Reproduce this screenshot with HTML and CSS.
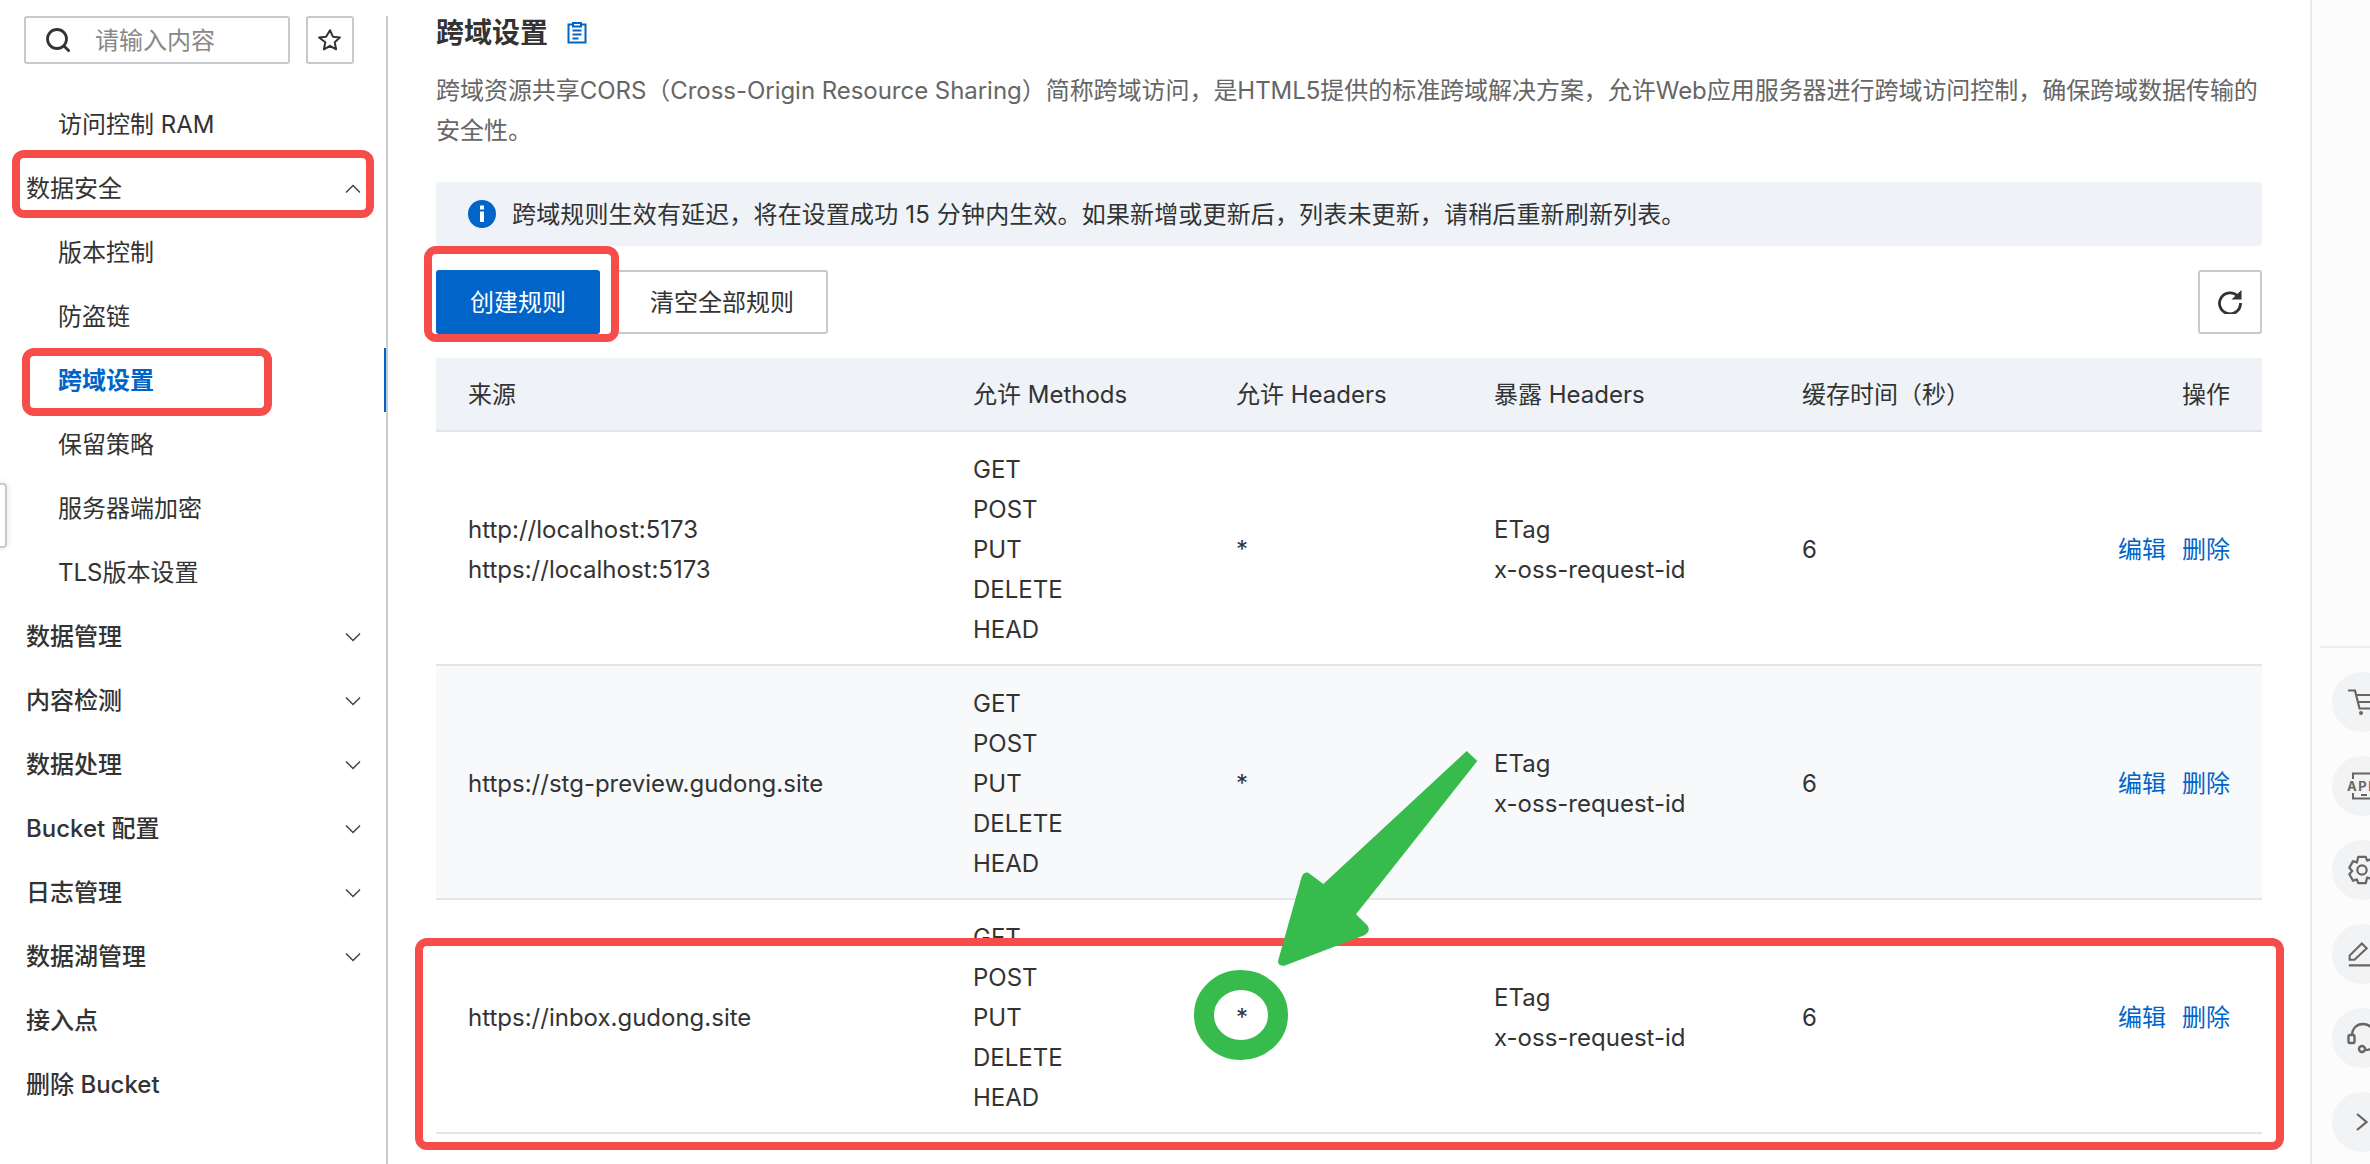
FILE: index.html
```html
<!DOCTYPE html>
<html lang="zh-CN">
<head>
<meta charset="utf-8">
<title>跨域设置</title>
<link rel="stylesheet" href="styles.css">
</head>
<body>
<div class="page">
  <aside class="sidebar">
    <div class="search-row">
      <div class="search">
        <svg class="search-icon" viewBox="0 0 24 24" width="24" height="24"><circle cx="11" cy="11" r="9.500" fill="none" stroke="#333" stroke-width="2.800"/><path d="M17.500 17.500 23.500 23.500" stroke="#333" stroke-width="2.800" fill="none"/></svg>
        <span class="placeholder">请输入内容</span>
      </div>
      <button class="star-btn"><svg viewBox="0 0 24 24" width="24" height="24"><path d="M12 2.200l2.900 6.500 7 .8-5.200 4.800 1.400 7-6.100-3.500-6.100 3.500 1.400-7L1.100 9.500l7-.8z" fill="none" stroke="#333" stroke-width="2" stroke-linejoin="round"/></svg></button>
    </div>
    <nav class="nav">
      <div class="nav-item sub">访问控制 RAM</div>
      <div class="nav-item open">数据安全<svg class="chev" viewBox="0 0 16 10" width="16" height="10"><path d="M1 8.500 8 1.500l7 7" fill="none" stroke="#444" stroke-width="1.500"/></svg></div>
      <div class="nav-item sub">版本控制</div>
      <div class="nav-item sub">防盗链</div>
      <div class="nav-item sub active">跨域设置</div>
      <div class="nav-item sub">保留策略</div>
      <div class="nav-item sub">服务器端加密</div>
      <div class="nav-item sub">TLS版本设置</div>
      <div class="nav-item group">数据管理<svg class="chev" viewBox="0 0 16 10" width="16" height="10"><path d="M1 1.500l7 7 7-7" fill="none" stroke="#444" stroke-width="1.500"/></svg></div>
      <div class="nav-item group">内容检测<svg class="chev" viewBox="0 0 16 10" width="16" height="10"><path d="M1 1.500l7 7 7-7" fill="none" stroke="#444" stroke-width="1.500"/></svg></div>
      <div class="nav-item group">数据处理<svg class="chev" viewBox="0 0 16 10" width="16" height="10"><path d="M1 1.500l7 7 7-7" fill="none" stroke="#444" stroke-width="1.500"/></svg></div>
      <div class="nav-item group">Bucket 配置<svg class="chev" viewBox="0 0 16 10" width="16" height="10"><path d="M1 1.500l7 7 7-7" fill="none" stroke="#444" stroke-width="1.500"/></svg></div>
      <div class="nav-item group">日志管理<svg class="chev" viewBox="0 0 16 10" width="16" height="10"><path d="M1 1.500l7 7 7-7" fill="none" stroke="#444" stroke-width="1.500"/></svg></div>
      <div class="nav-item group">数据湖管理<svg class="chev" viewBox="0 0 16 10" width="16" height="10"><path d="M1 1.500l7 7 7-7" fill="none" stroke="#444" stroke-width="1.500"/></svg></div>
      <div class="nav-item group">接入点</div>
      <div class="nav-item group">删除 Bucket</div>
    </nav>
  </aside>

  <main class="main">
    <h1 class="title">跨域设置
      <svg class="doc-icon" viewBox="0 0 20 22" width="20" height="22"><path d="M6 2.500H1.500v18h17v-18H14M6 1h8v3.500H6zM5.500 8.500h9M5.500 12.500h9M5.500 16.500h6" fill="none" stroke="#0064c8" stroke-width="2"/></svg>
    </h1>
    <p class="desc">跨域资源共享CORS（Cross-Origin Resource Sharing）简称跨域访问，是HTML5提供的标准跨域解决方案，允许Web应用服务器进行跨域访问控制，确保跨域数据传输的安全性。</p>
    <div class="alert">
      <svg class="info-icon" viewBox="0 0 28 28" width="28" height="28"><circle cx="14" cy="14" r="14" fill="#0064c8"/><rect x="12" y="11.500" width="4" height="10.500" fill="#fff"/><rect x="12" y="5.500" width="4" height="4" fill="#fff"/></svg>
      <span class="alert-text">跨域规则生效有延迟，将在设置成功 15 分钟内生效。如果新增或更新后，列表未更新，请稍后重新刷新列表。</span>
    </div>
    <div class="toolbar">
      <button class="btn primary">创建规则</button>
      <button class="btn">清空全部规则</button>
      <button class="btn icon-btn"><svg viewBox="0 0 24 24" width="24" height="24"><path d="M20 6.500A10.500 10.500 0 1 0 22.500 13" fill="none" stroke="#333" stroke-width="2.800"/><path d="M13.500 9.500H23.500V0z" fill="#333"/></svg></button>
    </div>
    <table class="rules">
      <colgroup><col class="c1"><col class="c2"><col class="c3"><col class="c4"><col class="c5"><col></colgroup>
      <thead>
        <tr><th>来源</th><th>允许 Methods</th><th>允许 Headers</th><th>暴露 Headers</th><th>缓存时间（秒）</th><th class="ops-head">操作</th></tr>
      </thead>
      <tbody>
        <tr>
          <td>http://localhost:5173<br>https://localhost:5173</td>
          <td>GET<br>POST<br>PUT<br>DELETE<br>HEAD</td>
          <td>*</td>
          <td>ETag<br>x-oss-request-id</td>
          <td>6</td>
          <td class="ops"><a>编辑</a><a>删除</a></td>
        </tr>
        <tr class="hover">
          <td>https://stg-preview.gudong.site</td>
          <td>GET<br>POST<br>PUT<br>DELETE<br>HEAD</td>
          <td>*</td>
          <td>ETag<br>x-oss-request-id</td>
          <td>6</td>
          <td class="ops"><a>编辑</a><a>删除</a></td>
        </tr>
        <tr>
          <td>https://inbox.gudong.site</td>
          <td>GET<br>POST<br>PUT<br>DELETE<br>HEAD</td>
          <td>*</td>
          <td>ETag<br>x-oss-request-id</td>
          <td>6</td>
          <td class="ops"><a>编辑</a><a>删除</a></td>
        </tr>
      </tbody>
    </table>
  </main>

  <aside class="rail">
    <div class="rail-line"></div>
    <div class="rail-btn"><svg viewBox="0 0 34 26" width="34" height="26"><path d="M1 1.500h7l4.500 18h20M9 6h24M10.500 13h22" fill="none" stroke="#666" stroke-width="2.200"/><circle cx="14" cy="24" r="2" fill="#666"/><circle cx="28" cy="24" r="2" fill="#666"/></svg></div>
    <div class="rail-btn"><svg viewBox="0 0 34 28" width="34" height="28"><path d="M6 7V1.500h27v25H6V21M14 23h6" fill="none" stroke="#666" stroke-width="2"/><text class="api-text" x="0" y="19">API</text></svg></div>
    <div class="rail-btn"><svg viewBox="0 0 32 32" width="30" height="30"><path d="M12 2h8l1.500 4 4-1.500 4 7-3 3.500 3 3.500-4 7-4-1.500L20 30h-8l-1.500-4-4 1.500-4-7 3-3.500-3-3.500 4-7 4 1.500z" fill="none" stroke="#666" stroke-width="2.400" stroke-linejoin="round"/><circle cx="16" cy="16" r="5" fill="none" stroke="#666" stroke-width="2.400"/></svg></div>
    <div class="rail-btn"><svg class="rail-pen" viewBox="0 0 32 32" width="26" height="26"><path d="M2 23l0-5L17 3l6 6L8 23zM1 30h30" fill="none" stroke="#666" stroke-width="2.600"/></svg></div>
    <div class="rail-btn"><svg viewBox="0 0 32 32" width="32" height="32"><path d="M5 14C5 6 10 2 16 2s11 4 11 12M27 14v8c0 4-4 6-10 6" fill="none" stroke="#666" stroke-width="2.400"/><rect x="1.500" y="13" width="6" height="8" rx="1.500" fill="none" stroke="#666" stroke-width="2.400"/><circle cx="15" cy="27" r="3" fill="none" stroke="#666" stroke-width="2.400"/></svg></div>
    <div class="rail-btn"><svg class="rail-chev" viewBox="0 0 12 18" width="12" height="18"><path d="M1 1 10.500 9 1 17" fill="none" stroke="#666" stroke-width="2.200"/></svg></div>
  </aside>

  <div class="edge-tab"></div>

  <svg class="annotations" viewBox="0 0 2370 1164" width="2370" height="1164">
    <rect class="mark" x="16" y="154" width="354" height="60" rx="8"/>
    <rect class="mark" x="26" y="352" width="242" height="60" rx="8"/>
    <rect class="mark" x="428" y="250" width="187" height="88" rx="8"/>
    <rect class="mark" x="419" y="942" width="1861" height="204" rx="8"/>
    <ellipse class="ring" cx="1241" cy="1015" rx="37" ry="35"/>
    <path class="arrow" d="M1466.700 751 1477.300 761 1356 914.300 1367.500 925.500Q1371 931 1365 935L1284.300 965.700Q1277 966 1278.300 960L1301.700 876.700Q1305 870 1310 874L1323.300 884Z"/>
  </svg>
</div>
</body>
</html>
```

FILE: styles.css
```css
* { box-sizing: border-box; }
html, body { margin: 0; height: 100%; background: #fff; overflow: hidden; }
body {
  font-family: Inter, "Noto Sans CJK SC", sans-serif;
  font-size: 24px;
  line-height: 40px;
  color: #333;
}
.page {
  position: relative;
  display: flex;
  width: 2370px;
  height: 1164px;
  overflow: hidden;
}

/* Sidebar */
.sidebar {
  flex: 0 0 388px;
  margin-top: 16px;
  border-right: 2px solid #c5c9d0;
}
.search-row { display: flex; gap: 16px; padding-left: 24px; height: 48px; }
.search {
  display: flex;
  align-items: center;
  gap: 25px;
  width: 266px;
  padding-left: 20px;
  border: 2px solid #c5c9d0;
  border-radius: 3px;
}
.search-icon { flex: none; }
.placeholder { color: #888; padding-top: 2px; }
.star-btn {
  display: flex;
  align-items: center;
  justify-content: center;
  width: 48px;
  padding: 0;
  background: #fff;
  border: 2px solid #c5c9d0;
  border-radius: 3px;
}
.nav { margin-top: 28px; }
.nav-item {
  position: relative;
  display: flex;
  align-items: center;
  justify-content: space-between;
  height: 64px;
  padding: 2px 25px 0 26px;
}
.nav-item.sub { padding-left: 58px; }
.nav-item.group { font-weight: 500; }
.nav-item.active { color: #0064c8; font-weight: 700; }
.nav-item.active::after {
  content: "";
  position: absolute;
  right: 0;
  top: 0;
  bottom: 0;
  width: 2px;
  background: #0064c8;
}

/* Main */
.main { flex: 0 0 1922px; padding: 13px 48px 0; }
.title {
  display: flex;
  align-items: center;
  gap: 19px;
  margin: 0;
  font-size: 28px;
  font-weight: 700;
  line-height: 40px;
}
.desc { margin: 18px 0 0; color: #666; letter-spacing: -0.04px; }
.alert {
  display: flex;
  align-items: center;
  gap: 16px;
  height: 64px;
  margin-top: 31px;
  padding-left: 32px;
  background: #eff3f8;
  border-radius: 3px;
}
.info-icon { flex: none; }
.alert-text { padding-top: 2px; letter-spacing: 0.15px; }
.toolbar { display: flex; gap: 16px; margin-top: 24px; }
.btn {
  height: 64px;
  padding: 2px 32px 0;
  font: inherit;
  color: #333;
  background: #fff;
  border: 2px solid #c5c9d0;
  border-radius: 3px;
}
.btn.primary { padding: 2px 34px 0; color: #fff; background: #0064c8; border: 0; }
.icon-btn {
  display: flex;
  align-items: center;
  justify-content: center;
  width: 64px;
  padding: 0;
  margin-left: auto;
}
.rules {
  width: 100%;
  margin-top: 24px;
  border-collapse: separate;
  border-spacing: 0;
  table-layout: fixed;
}
.c1 { width: 505px; }
.c2 { width: 263px; }
.c3 { width: 258px; }
.c4 { width: 308px; }
.c5 { width: 300px; }
th, td {
  padding: 2px 0 0 32px;
  text-align: left;
  border-bottom: 2px solid #e3e5e8;
}
th { height: 74px; font-weight: 400; background: #eff3f8; }
td { height: 234px; padding-top: 4px; }
.hover td { background: #f8f9fb; }
th.ops-head, td.ops { padding-right: 32px; text-align: right; }
.ops a { color: #0064c8; }
.ops a + a { margin-left: 16px; }

/* Right rail */
.rail {
  flex: 0 0 60px;
  padding: 646px 0 0 8px;
  background: #fcfcfc;
  border-left: 2px solid #e8e9eb;
  overflow: hidden;
}
.rail-line { width: 60px; height: 2px; background: #ececee; margin-bottom: 24px; }
.rail-btn {
  display: flex;
  align-items: center;
  width: 60px;
  height: 60px;
  margin: 0 0 24px 12px;
  padding-left: 15px;
  background: #f2f3f5;
  border-radius: 50%;
}
.rail-btn svg { flex: none; }
.rail-btn .rail-chev { margin-left: 9px; }
.rail-btn .rail-pen { margin-left: 1px; }
.api-text {
  font-size: 13px;
  font-weight: 700;
  letter-spacing: 1.500px;
  fill: #666;
}

/* Overlays */
.edge-tab {
  position: absolute;
  left: -10px;
  top: 483px;
  width: 17px;
  height: 65px;
  background: #fff;
  border: 2px solid #c5c9d0;
  border-radius: 4px;
  box-shadow: 0 0 6px rgba(0, 0, 0, .12);
}
.annotations { position: absolute; left: 0; top: 0; pointer-events: none; }
.mark { fill: none; stroke: #f64c4a; stroke-width: 8; }
.ring { fill: none; stroke: #37bb4d; stroke-width: 20; }
.arrow { fill: #37bb4d; }
```
